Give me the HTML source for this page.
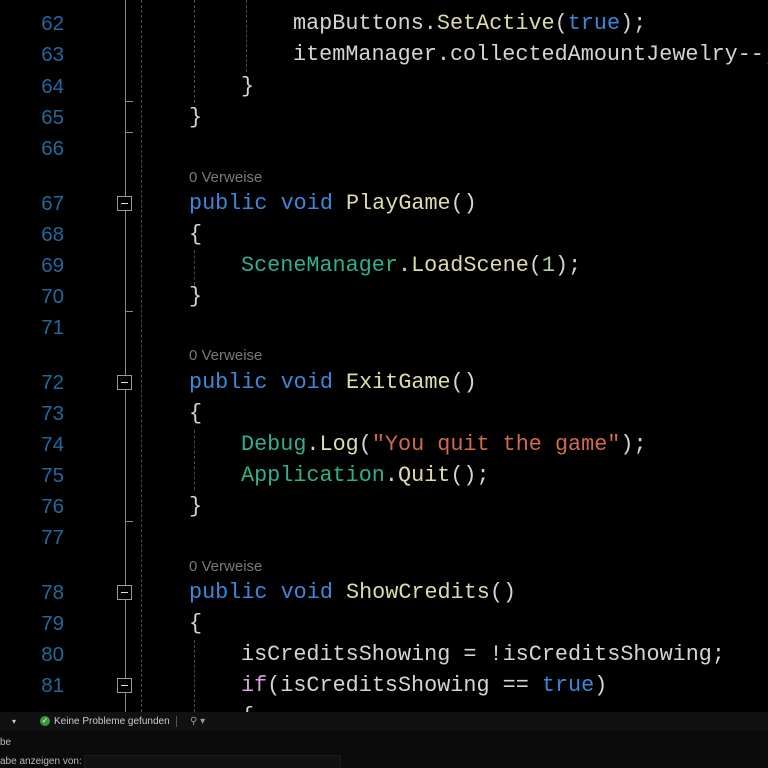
<!DOCTYPE html>
<html><head><meta charset="utf-8"><style>
html,body{margin:0;padding:0;background:#000;width:768px;height:768px;overflow:hidden;position:relative}
.ln{position:absolute;left:0;width:64px;text-align:right;font:20.5px "Liberation Sans",sans-serif;color:#1f6a9c;line-height:31px}
.c{position:absolute;font:21.8px "Liberation Mono",monospace;color:#d4d4d4;white-space:pre;line-height:31px}
.lens{position:absolute;left:189px;font:15px "Liberation Sans",sans-serif;color:#7a7a7a;line-height:20px}
.k{color:#3a88db}.m{color:#dcdcaa}.t{color:#2fb08c}.s{color:#d16a45}.n{color:#b5cea8}.p{color:#d8a0df}
.fold{position:absolute;left:117px;width:13px;height:13px;border:1px solid #9a9a9a;background:#000}
.fold:after{content:"";position:absolute;left:3px;top:6px;width:7px;height:1px;background:#ddd}
.vl{position:absolute;left:125px;width:1px;background:#888}
.tick{position:absolute;left:125px;width:8px;height:1px;background:#888}
.dash{position:absolute;width:0;border-left:1px dashed #4a4a4a}
</style></head><body>
<div class="vl" style="top:0;height:712px"></div>
<div class="tick" style="top:101px"></div><div class="tick" style="top:132px"></div>
<div class="tick" style="top:311px"></div><div class="tick" style="top:521px"></div>
<div class="dash" style="left:141px;top:0;height:712px"></div>
<div class="dash" style="left:194px;top:0;height:103px"></div>
<div class="dash" style="left:246px;top:0;height:72px"></div>
<div class="dash" style="left:194px;top:250px;height:35px"></div>
<div class="dash" style="left:194px;top:430px;height:60px"></div>
<div class="dash" style="left:194px;top:640px;height:72px"></div>

<div class="ln" style="top:8px">62</div><div class="c" style="top:8px;left:293px">mapButtons.<span class="m">SetActive</span>(<span class="k">true</span>);</div>
<div class="ln" style="top:39px">63</div><div class="c" style="top:39px;left:293px">itemManager.collectedAmountJewelry--;</div>
<div class="ln" style="top:71px">64</div><div class="c" style="top:71px;left:241px">}</div>
<div class="ln" style="top:102px">65</div><div class="c" style="top:102px;left:189px">}</div>
<div class="ln" style="top:133px">66</div>

<div class="lens" style="top:168px">0 Verweise</div>
<div class="ln" style="top:188px">67</div><div class="fold" style="top:196px"></div><div class="c" style="top:188px;left:189px"><span class="k">public</span> <span class="k">void</span> <span class="m">PlayGame</span>()</div>
<div class="ln" style="top:219px">68</div><div class="c" style="top:219px;left:189px">{</div>
<div class="ln" style="top:250px">69</div><div class="c" style="top:250px;left:241px"><span class="t">SceneManager</span>.<span class="m">LoadScene</span>(<span class="n">1</span>);</div>
<div class="ln" style="top:281px">70</div><div class="c" style="top:281px;left:189px">}</div>
<div class="ln" style="top:312px">71</div>

<div class="lens" style="top:346px">0 Verweise</div>
<div class="ln" style="top:367px">72</div><div class="fold" style="top:375px"></div><div class="c" style="top:367px;left:189px"><span class="k">public</span> <span class="k">void</span> <span class="m">ExitGame</span>()</div>
<div class="ln" style="top:398px">73</div><div class="c" style="top:398px;left:189px">{</div>
<div class="ln" style="top:429px">74</div><div class="c" style="top:429px;left:241px"><span class="t">Debug</span>.<span class="m">Log</span>(<span class="s">"You quit the game"</span>);</div>
<div class="ln" style="top:460px">75</div><div class="c" style="top:460px;left:241px"><span class="t">Application</span>.<span class="m">Quit</span>();</div>
<div class="ln" style="top:491px">76</div><div class="c" style="top:491px;left:189px">}</div>
<div class="ln" style="top:522px">77</div>

<div class="lens" style="top:557px">0 Verweise</div>
<div class="ln" style="top:577px">78</div><div class="fold" style="top:585px"></div><div class="c" style="top:577px;left:189px"><span class="k">public</span> <span class="k">void</span> <span class="m">ShowCredits</span>()</div>
<div class="ln" style="top:608px">79</div><div class="c" style="top:608px;left:189px">{</div>
<div class="ln" style="top:639px">80</div><div class="c" style="top:639px;left:241px">isCreditsShowing = !isCreditsShowing;</div>
<div class="ln" style="top:670px">81</div><div class="fold" style="top:678px"></div><div class="c" style="top:670px;left:241px"><span class="p">if</span>(isCreditsShowing == <span class="k">true</span>)</div>
<div class="c" style="top:701px;left:241px">{</div>

<div style="position:absolute;left:0;top:712px;width:768px;height:19px;background:#111113;font:10px 'Liberation Sans',sans-serif;color:#ccc;line-height:19px">
<span style="position:absolute;left:12px;font-size:8px">▾</span>
<span style="position:absolute;left:40px;top:4px;width:10px;height:10px;border-radius:50%;background:#3a9a3a;color:#fff;font-size:8px;line-height:10px;text-align:center">✓</span>
<span style="position:absolute;left:54px">Keine Probleme gefunden</span>
<span style="position:absolute;left:176px;top:4px;width:1px;height:11px;background:#555"></span>
<span style="position:absolute;left:190px;color:#999">⚲ ▾</span>
</div>
<div style="position:absolute;left:0;top:731px;width:768px;height:37px;background:#0b0b0c;font:10px 'Liberation Sans',sans-serif;color:#bbb">
<span style="position:absolute;left:0;top:6px">be</span>
<span style="position:absolute;left:0;top:25px">abe anzeigen von:</span>
<div style="position:absolute;left:84px;top:24px;width:255px;height:14px;background:#111;border:1px solid #1c1c1c"></div>
</div>
</body></html>
